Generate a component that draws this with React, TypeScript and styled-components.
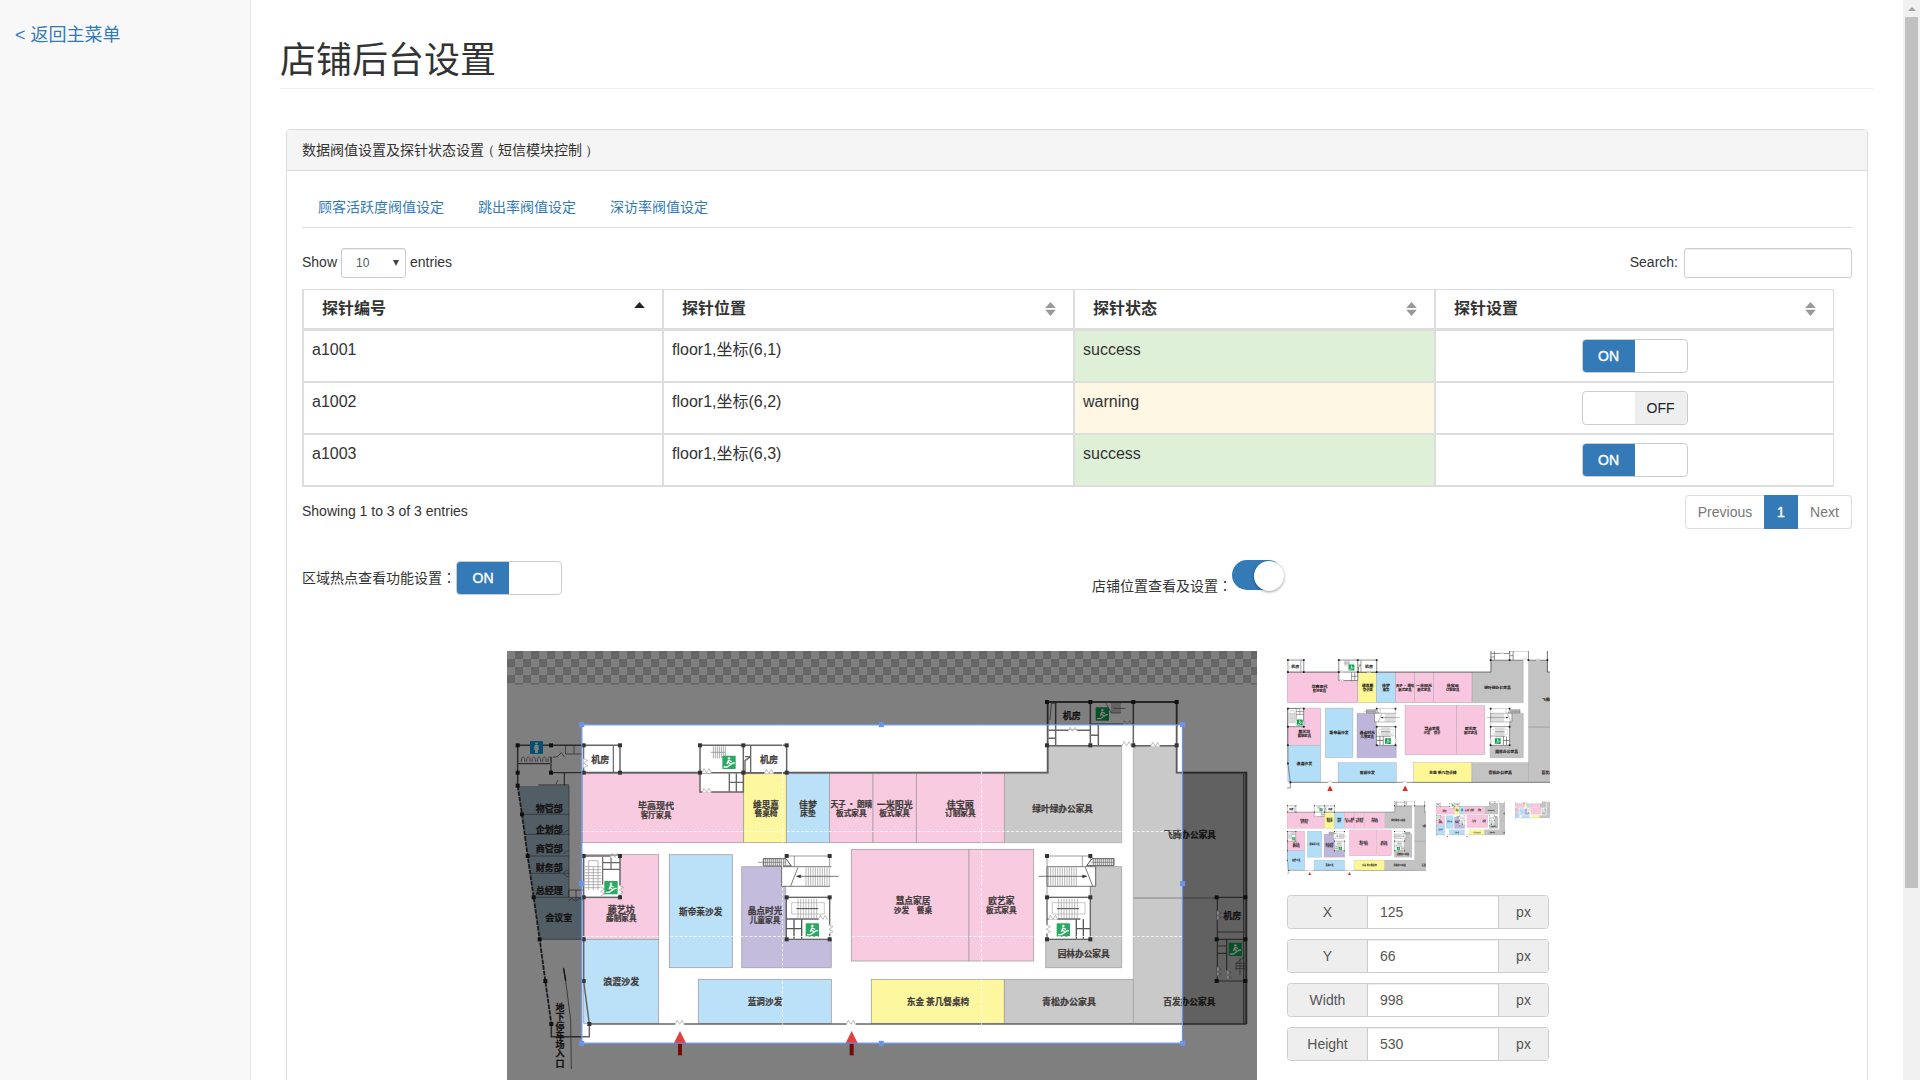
import React from "react";
import styled, { createGlobalStyle, css } from "styled-components";

const GlobalStyle = createGlobalStyle`
  * { box-sizing: border-box; }
  html, body { margin: 0; padding: 0; height: 100%; overflow: hidden; }
  body {
    background: #fff;
    color: #333;
    font: 14px/20px "Liberation Sans", "Noto Sans CJK SC", sans-serif;
    text-spacing-trim: space-all;
  }
  input, select, button { font-family: inherit; }
`;

const Shell = styled.div`
  display: grid;
  grid-template-columns: 251px minmax(0, 1fr) 17px;
  height: 1080px;
  overflow: hidden;
`;

const Sidebar = styled.aside`
  background: #f8f8f8;
  border-right: 1px solid #e7e7e7;
  padding: 23px 15px;
`;

const BackLink = styled.a`
  color: #337ab7;
  font-size: 18px;
  line-height: 25px;
  text-decoration: none;
`;

const Main = styled.main`
  padding: 41px 30px 0 29px;
`;

const PageTitle = styled.h1`
  margin: 0 0 40px;
  height: 48px;
  padding-bottom: 8px;
  border-bottom: 1px solid #eee;
  font-size: 36px;
  font-weight: 400;
  line-height: 39px;
`;

const Panel = styled.section`
  margin: 0 5px 0 6px;
  height: 1100px;
  border: 1px solid #ddd;
  border-radius: 4px;
`;

const PanelHeading = styled.header`
  height: 41px;
  padding: 10px 15px;
  background: #f5f5f5;
  border-bottom: 1px solid #ddd;
  border-radius: 3px 3px 0 0;
`;

const Bracket = styled.span<{ $shift: number }>`
  display: inline-block;
  width: 14px;
  text-indent: ${(p) => p.$shift}px;
  font-family: "Liberation Sans", sans-serif;
`;

const Colon = styled.i`
  display: inline-block;
  width: 14px;
  font-family: "Noto Sans CJK TC", sans-serif;
  font-style: normal;
`;

const PanelBody = styled.div`
  padding: 15px;
`;

const Tabs = styled.nav`
  display: flex;
  gap: 2px;
  height: 42px;
  border-bottom: 1px solid #ddd;
`;

const Tab = styled.a`
  padding: 11px 16px;
  color: #337ab7;
  text-decoration: none;
`;

const TableTools = styled.div`
  display: flex;
  justify-content: space-between;
  align-items: center;
  margin-top: 20px;
  height: 30px;
`;

const ToolLabel = styled.label`
  display: flex;
  align-items: center;

  > span { padding-bottom: 2px; }
`;

const controlLook = css`
  background: #fff;
  border: 1px solid #ccc;
  border-radius: 3px;
  box-shadow: inset 0 1px 1px rgba(0, 0, 0, 0.075);
  color: #555;
`;

const LengthSelect = styled.div`
  ${controlLook}
  display: flex;
  justify-content: space-between;
  align-items: center;
  width: 65px;
  height: 30px;
  margin: 0 4px;
  padding: 0 6px 0 14px;
  font-size: 12px;
`;

const Caret = styled.i`
  border-left: 3px solid transparent;
  border-right: 3px solid transparent;
  border-top: 6px solid #444;
`;

const SearchInput = styled.input`
  ${controlLook}
  width: 168px;
  height: 30px;
  margin-left: 6px;
  padding: 5px 10px;
`;

const Table = styled.div`
  display: grid;
  grid-template-columns: 360px 411px 361px 398px;
  width: 1532px;
  margin-top: 11px;
  border: 1px solid #ddd;
  font-size: 16px;
`;

const Cell = styled.div<{ $tone?: string; $center?: boolean }>`
  display: flex;
  justify-content: ${(p) => (p.$center ? "center" : "flex-start")};
  height: 52px;
  padding: ${(p) => (p.$center ? "8px 8px 0" : "7px 8px 0")};
  border: 1px solid #ddd;
  background: ${(p) => (p.$tone === "success" ? "#dff0d8" : p.$tone === "warning" ? "#fef7e4" : "#fff")};
  line-height: 23px;

  &:nth-child(4n) { border-right: 0; }
`;

const HeadCell = styled.div`
  display: flex;
  justify-content: space-between;
  align-items: center;
  height: 40px;
  padding: 0 17px 0 18px;
  border: 1px solid #ddd;
  border-top: 0;
  border-bottom-width: 2px;
  font-weight: 700;

  &:nth-child(4n) { border-right: 0; }
`;

const SortMark = styled.svg`
  display: block;
  width: 11px;
  height: 14px;
`;

const ToggleFrame = styled.div`
  display: flex;
  flex: none;
  width: 106px;
  height: 34px;
  border: 1px solid #ccc;
  border-radius: 4px;
  overflow: hidden;
  background: #fff;
`;

const ToggleHalf = styled.span<{ $kind: "on" | "off" | "blank" }>`
  flex: 1;
  font-size: 14px;
  line-height: 33px;
  text-align: center;
  ${(p) => p.$kind === "on" && "background: #337ab7; color: #fff; -webkit-text-stroke: 0.4px #fff;"}
  ${(p) => p.$kind === "off" && "background: #eee; color: #222;"}
`;

const TableFooter = styled.div`
  display: flex;
  justify-content: space-between;
  margin-top: 8px;
  height: 34px;
  line-height: 32px;
`;

const Pagination = styled.div`
  display: flex;
  height: 34px;
`;

const PageButton = styled.span<{ $active?: boolean; $width: number }>`
  width: ${(p) => p.$width}px;
  border: 1px solid #ddd;
  color: #777;
  text-align: center;
  line-height: 32px;
  &:first-child { border-radius: 4px 0 0 4px; border-right: 0; }
  &:last-child { border-radius: 0 4px 4px 0; border-left: 0; }
  ${(p) => p.$active && "background: #337ab7; border-color: #337ab7; color: #fff; -webkit-text-stroke: 0.4px #fff;"}
`;

const SettingsRow = styled.div`
  display: grid;
  grid-template-columns: 790px 1fr;
  margin-top: 30px;
  height: 92px;
`;

const Setting = styled.div<{ $drop: number }>`
  display: flex;
  align-items: flex-start;
  padding-top: ${(p) => (p.$drop > 10 ? 0 : 2)}px;

  > span { padding-top: ${(p) => p.$drop}px; }
`;

const SwitchTrack = styled.div`
  display: flex;
  justify-content: flex-end;
  width: 51px;
  height: 30px;
  margin-top: 1px;
  border-radius: 20px;
  background: #337ab7;
`;

const SwitchKnob = styled.i`
  width: 30px;
  height: 30px;
  margin: 1px -1px 0 0;
  border-radius: 50%;
  background: #fff;
  box-shadow: 0 1px 3px rgba(0, 0, 0, 0.4);
`;

const Workspace = styled.div`
  display: grid;
  grid-template-columns: 750px 264px;
  column-gap: 30px;
  padding-left: 205px;
`;

const CropperSvg = styled.svg`
  display: block;
  width: 750px;
  height: 469px;
`;

const PreviewSide = styled.div`
  display: flex;
  flex-direction: column;
`;

const PreviewList = styled.div`
  display: flex;
  flex-wrap: wrap;
  align-items: flex-start;
  gap: 10px;
  height: 244px;
  align-content: flex-start;
`;

const PreviewSvg = styled.svg<{ $w: number; $h: number }>`
  display: block;
  flex: none;
  width: ${(p) => p.$w}px;
  height: ${(p) => p.$h}px;
`;

const InputGroup = styled.label`
  display: grid;
  grid-template-columns: 79px 132px 49px;
  width: 262px;
  height: 34px;
  margin-bottom: 10px;
  border: 1px solid #ccc;
  border-radius: 4px;
  overflow: hidden;
  color: #555;
`;

const Addon = styled.span`
  background: #eee;
  text-align: center;
  line-height: 32px;
`;

const GroupInput = styled.input`
  min-width: 0;
  border: 0;
  border-left: 1px solid #ccc;
  border-right: 1px solid #ccc;
  box-shadow: inset 0 1px 1px rgba(0, 0, 0, 0.075);
  padding: 0 12px;
  color: #555;
  font-size: 14px;
`;

const Scrollbar = styled.div`
  display: flex;
  flex-direction: column;
  align-items: center;
  background: #f1f1f1;
`;

const ScrollArrow = styled.i<{ $down?: boolean }>`
  margin: ${(p) => (p.$down ? "auto 0 7px" : "7px 0 6px")};
  border-left: 4px solid transparent;
  border-right: 4px solid transparent;
  ${(p) => (p.$down ? "border-top: 4px solid #505050;" : "border-bottom: 4px solid #a3a3a3;")}
`;

const ScrollThumb = styled.div`
  width: 13px;
  height: 871px;
  background: #c1c1c1;
`;

/* ---------- floor plan drawing (3 units per displayed pixel) ---------- */

const PINK = "#f8c6de";
const BLUE = "#b3def8";
const GREY = "#c3c3c3";
const YELLOW = "#fdf795";
const PURPLE = "#beb5da";
const SLATE = "#a3bccd";

const rooms: [number, number, number, number, string][] = [
  [247, 401, 483, 207, PINK],
  [731, 401, 128, 207, YELLOW],
  [859, 401, 130, 207, BLUE],
  [989, 401, 130, 207, PINK],
  [1119, 401, 130, 207, PINK],
  [1249, 401, 264, 207, PINK],
  [251, 644, 225, 254, PINK],
  [251, 898, 225, 252, BLUE],
  [508, 644, 189, 339, BLUE],
  [1054, 628, 353, 335, PINK],
  [1407, 628, 194, 335, PINK],
  [595, 1018, 399, 133, BLUE],
  [1114, 1018, 399, 133, YELLOW],
  [1513, 1018, 387, 133, GREY],
];

const labels: [number, number, string, number][] = [
  [301, 360, "机房", 27], [807, 358, "机房", 27], [1715, 228, "机房", 27], [2197, 828, "机房", 27],
  [468, 498, "毕高现代", 27], [468, 526, "客厅家具", 23],
  [798, 493, "维思嘉", 26], [798, 520, "餐桌椅", 23],
  [924, 493, "佳梦", 27], [924, 520, "床垫", 23],
  [1054, 493, "天子 · 朗晴", 23], [1054, 518, "板式家具", 23],
  [1184, 493, "一米阳光", 27], [1184, 520, "板式家具", 23],
  [1381, 493, "佳宝丽", 27], [1381, 520, "订制家具", 23],
  [1688, 505, "绿叶绿办公家具", 26], [2070, 583, "飞腾办公家具", 26],
  [364, 808, "藤艺坊", 27], [364, 835, "藤制家具", 23],
  [364, 1025, "浪渡沙发", 27], [602, 814, "斯帝莱沙发", 26],
  [795, 813, "晶点时光", 26], [795, 841, "儿童家具", 23],
  [1239, 783, "慧点家居", 26], [1239, 810, "沙发　餐桌", 23],
  [1504, 783, "欧艺家", 26], [1504, 810, "板式家具", 23],
  [1751, 940, "园林办公家具", 26], [795, 1086, "蓝调沙发", 26],
  [1314, 1086, "东金 茶几餐桌椅", 26], [1707, 1086, "青松办公家具", 27],
  [2068, 1086, "百发办公家具", 26],
  [148, 505, "物管部", 27], [148, 568, "企划部", 27], [148, 627, "商管部", 27],
  [148, 682, "财务部", 27], [148, 752, "总经理", 27], [176, 833, "会议室", 27],
];

const columns: [number, number][] = [
  [53, 316], [153, 316], [53, 398], [153, 398], [53, 437], [66, 523], [83, 648], [101, 772],
  [119, 898], [136, 1023], [154, 1152], [251, 316], [360, 316], [251, 398], [360, 398],
  [600, 316], [730, 316], [860, 316], [600, 398], [730, 398], [860, 398],
  [251, 648], [360, 648], [251, 772], [360, 772], [251, 898], [251, 1023], [268, 1152],
  [860, 648], [989, 648], [860, 772], [989, 772], [860, 898], [989, 898],
  [1641, 186], [1771, 186], [1900, 186], [2030, 186], [1641, 316], [1771, 316], [1900, 316], [2030, 316],
  [1641, 648], [1771, 648], [1641, 772], [1771, 772], [1641, 898], [1771, 898],
  [2150, 772], [2236, 772], [2150, 898], [2236, 898], [2150, 1023], [2236, 1023],
];

const bars = (x: number, y: number, w: number, h: number, step: number) => {
  let d = "";
  for (let i = x; i <= x + w; i += step) d += `M${i} ${y}v${h}`;
  return d;
};
const rungs = (x: number, y: number, w: number, h: number, step: number) => {
  let d = "";
  for (let i = y; i <= y + h; i += step) d += `M${x} ${i}h${w}`;
  return d;
};

function ExitSign({ x, y }: { x: number; y: number }) {
  return (
    <g transform={`translate(${x} ${y})`}>
      <rect width="40" height="40" rx="2" fill="#12a050" />
      <circle cx="20" cy="8" r="3.6" fill="#fff" />
      <path d="M19 13l-5 12M19 14l9 4M17 19l8 7M4 34h10l18-12h5" fill="none" stroke="#fff" strokeWidth="4" />
    </g>
  );
}

function Door({ x, y, upright }: { x: number; y: number; upright?: boolean }) {
  return (
    <g transform={`translate(${x} ${y})${upright ? " rotate(90)" : ""}`}>
      <path d="M-14 0h28" stroke="#fff" strokeWidth="6" />
      <path d="M-14 3l6-13 8 12 7-12 7 13" fill="none" stroke="#777" strokeWidth="1.6" />
    </g>
  );
}

function StairCore({ x, flip }: { x: number; flip?: boolean }) {
  return (
    <g>
      <rect x={x} y="772" width="130" height="126" fill="#fff" stroke="#555" strokeWidth="4" />
      <path d={`M${x} 837h100`} stroke="#555" strokeWidth="4" />
      <path d={bars(x + 35, 776, 56, 58, 8)} stroke="#888" strokeWidth="1.8" />
      <path d={`M${x + 16} 788h98v34h-98z`} fill="none" stroke="#999" strokeWidth="1.8" />
      <path d={`M${x + 30} 806h66`} stroke="#333" strokeWidth="3" />
      {flip ? (
        <path d={`M${x + 88} 838v58M${x + 109} 838v58M${x + 88} 866h42`} stroke="#444" strokeWidth="4" />
      ) : (
        <path d={`M${x + 23} 838v58M${x + 46} 838v58M${x} 866h46`} stroke="#444" strokeWidth="4" />
      )}
      <ExitSign x={x + (flip ? 29 : 58)} y={850} />
      <Door x={flip ? x + 18 : x + 110} y={836} />
      <Door x={flip ? x : x + 130} y={868} upright />
    </g>
  );
}

type LabelSet = "all" | "cropped" | "none";

function FloorPlan({ show }: { show: LabelSet }) {
  const visible = labels.filter(([x, y]) => show === "all" || (show === "cropped" && x > 245 && x < 2110 && y > 254));
  return (
    <g>
      <rect x="21" y="134" width="2250" height="1306" fill="#fff" />
      <path d="M55 438H207V772H251V898H119L101 772 83 648 66 523Z" fill={SLATE} />
      <path d="M66 523H207M75 583H207M83 648H207M92 700H207M101 772H251V898H119M207 437V772" fill="none" stroke="#555" strokeWidth="2" />
      <path d="M1645 319H1865V608H1513V401H1645Z" fill={GREY} stroke="#999" strokeWidth="2" />
      <path d="M1900 319H2030V401H2238V1151H1900Z" fill={GREY} stroke="#999" strokeWidth="2" />
      {rooms.map(([x, y, w, h, fill], i) => (
        <rect key={i} x={x} y={y} width={w} height={h} fill={fill} stroke="#9b9499" strokeWidth="2.4" />
      ))}
      <path d="M725 680H845V739H857V898H994V983H725Z" fill={PURPLE} stroke="#999" strokeWidth="2.4" />
      <path d="M1787 680H1865V983H1637V898H1771V739H1787Z" fill={GREY} stroke="#999" strokeWidth="2.4" />
      <path d="M1900 774H2150" stroke="#777" strokeWidth="3" />

      <path d="M251 398H600M730 398H860M860 398H1643V186H2030V398H2239V1152" fill="none" stroke="#4a4a4a" strokeWidth="5.5" />
      <path d="M268 1152H526M552 1152H1040M1067 1152H2239" fill="none" stroke="#555" strokeWidth="4.5" />
      <path d="M53 316H360V398M53 316V437M154 1152V1190H268V1152L251 1023V644" fill="none" stroke="#555" strokeWidth="4.5" />
      <path d="M53 437L66 523 83 648 101 772 119 898 136 1023 154 1152" fill="none" stroke="#3a3a3a" strokeWidth="5.5" strokeDasharray="14 3" />
      <path d="M251 316V398M340 318V396M153 350V398H251M193 398V437M115 435H207M55 371H150" fill="none" stroke="#555" strokeWidth="3.6" />
      <path d="M64 366v-10l5-6 5 6v10M80 366v-10l5-6 5 6v10M96 366v-10l5-6 5 6v10M112 366v-10l5-6 5 6v10M128 366v-10l5-6 5 6v10M144 366v-10l5-6 5 6v10" fill="none" stroke="#555" strokeWidth="2" />
      <path d="M158 352l14-2 12-12 10 14M197 318v24h50M222 318v24M168 432l6-12" fill="none" stroke="#666" strokeWidth="2.6" />
      <path d="M190 983L197 1023 212 1140 214 1287M206 770v-20h45M228 750v28M205 783l10-8 12 8 12-8 12 8" fill="none" stroke="#555" strokeWidth="2.4" />
      <path d="M191 985L197 1023" stroke="#222" strokeWidth="4" />
      <path d="M206 632c-10 2-14 6-14 10M206 690c-10 2-14 6-14 10 0 6 6 10 14 10M206 570c-10 2-12 6-14 10" fill="none" stroke="#555" strokeWidth="2" />

      <rect x="90" y="303" width="39" height="39" rx="3" fill="#0ba0e4" />
      <circle cx="109.5" cy="310" r="3.6" fill="#fff" />
      <path d="M104 315h11l2 14h-3v10h-9v-10h-3z" fill="#fff" />

      <path d="M600 316H860V398H600ZM600 398V456H730V316" fill="#fff" stroke="#555" strokeWidth="4.5" />
      <path d="M735 350H752M752 318V350L735 362V396M752 350V398M688 400V456M709 400V456M688 427H730" fill="none" stroke="#555" strokeWidth="4" />
      <path d={bars(640, 319, 36, 36, 6) + "M632 337h44"} stroke="#777" strokeWidth="2" />
      <Door x={620} y={396} />
      <Door x={807} y={398} />
      <Door x={620} y={455} />
      <Door x={253} y={370} upright />
      <ExitSign x={667} y={347} />

      <rect x="251" y="648" width="109" height="124" fill="#fff" stroke="#555" strokeWidth="4.5" />
      <path d={rungs(254, 680, 50, 68, 9)} stroke="#888" strokeWidth="2" />
      <path d="M266 750V662H294V750M280 680V750" fill="none" stroke="#888" strokeWidth="2" />
      <path d="M308 650V734M333 650V688M308 668H360M308 688H360" fill="none" stroke="#555" strokeWidth="3.5" />
      <Door x={345} y={650} />
      <Door x={304} y={755} upright />
      <Door x={360} y={750} upright />
      <ExitSign x={313} y={723} />

      <path d="M860 648H989V680M883 648V678" fill="none" stroke="#777" strokeWidth="2.4" />
      <path d="M790 656H858L874 678H790Z" fill="#eee" stroke="#444" strokeWidth="3" />
      <path d={bars(796, 657, 60, 20, 6) + "M774 667h80"} stroke="#555" strokeWidth="2" />
      <path d="M845 680H994M845 680V739H990M894 682L872 738" fill="none" stroke="#555" strokeWidth="2.6" />
      <path d={bars(918, 682, 70, 56, 7)} stroke="#888" strokeWidth="2" />
      <path d="M890 709H1016M890 709l12-4v8z" stroke="#333" strokeWidth="2.2" />
      <StairCore x={859} />

      <path d="M1641 648H1771V680M1747 648V678M1641 648V772M1771 739V772" fill="none" stroke="#777" strokeWidth="2.4" />
      <path d="M1760 677L1776 656H1842V677Z" fill="#eee" stroke="#444" strokeWidth="3" />
      <path d={bars(1780, 657, 60, 20, 6) + "M1775 667h65"} stroke="#555" strokeWidth="2" />
      <path d="M1641 680H1787V739H1641ZM1756 682L1778 738" fill="none" stroke="#555" strokeWidth="2.6" />
      <path d={bars(1645, 682, 84, 56, 7)} stroke="#888" strokeWidth="2" />
      <path d="M1616 709H1760M1760 709l-12-4v8z" stroke="#333" strokeWidth="2.2" />
      <StairCore x={1641} flip />

      <path d="M1667 188V316M1645 271H1771V186M1771 253H1900V186M1900 253V316M1645 295H1667M1645 317H1865M1900 317H2030M1771 253V316M1795 255V316M1771 286H1795" fill="none" stroke="#555" strokeWidth="4.5" />
      <path d="M1650 240L1654 190H1667" fill="none" stroke="#555" strokeWidth="2.4" />
      <path d={bars(1836, 189, 26, 30, 6) + "M1818 189l16 30h28M1840 205h36"} fill="none" stroke="#555" strokeWidth="2" />
      <Door x={1718} y={272} />
      <Door x={1882} y={252} />
      <Door x={1880} y={315} />
      <Door x={1966} y={317} />
      <ExitSign x={1787} y={202} />

      <path d="M2150 772H2238M2152 772V1023M2150 876H2236M2150 898H2236M2150 1023H2236M2150 918H2180M2150 940H2180M2180 898V990M2231 401V1151" fill="none" stroke="#555" strokeWidth="3.6" />
      <path d={rungs(2208, 970, 28, 20, 8) + "M2220 955v50M2208 990V970l26-20"} fill="none" stroke="#444" strokeWidth="2" />
      <Door x={2154} y={826} upright />
      <Door x={2154} y={995} upright />
      <Door x={2184} y={1005} upright />
      <ExitSign x={2186} y={908} />

      <Door x={539} y={1151} />
      <Door x={1053} y={1151} />
      {[540, 1055].map((x) => (
        <g key={x}>
          <path d={`M${x} 1173L${x + 19} 1211H${x - 19}Z`} fill="#df2b26" />
          <rect x={x - 6} y="1210" width="12" height="36" fill="#df1b16" />
        </g>
      ))}
      {columns.map(([x, y], i) => (
        <rect key={i} x={x - 6} y={y - 6} width="12" height="12" fill="#1e1e1e" />
      ))}
      <g
        fill="#2b2525"
        stroke="#2b2525"
        strokeWidth="0.7"
        fontWeight="700"
        textAnchor="middle"
        fontFamily='"Noto Sans CJK SC", sans-serif'
      >
        {visible.map(([x, y, text, size], i) => (
          <text key={i} x={x} y={y + size * 0.37} fontSize={size}>{text}</text>
        ))}
        {show === "all" && [..."地下停车场入口"].map((ch, i) => (
          <text key={ch} x="180" y={1113 + i * 27.8} fontSize="27">{ch}</text>
        ))}
      </g>
    </g>
  );
}

const handles = [
  [245, 254], [1144, 254], [2048, 254], [2048, 731],
  [2048, 1210], [1144, 1210], [245, 1210], [245, 731],
];

function Cropper() {
  return (
    <CropperSvg viewBox="21 33 2250 1407">
      <defs>
        <pattern id="checker" x="21" y="33" width="48" height="48" patternUnits="userSpaceOnUse">
          <rect width="48" height="48" fill="#fff" />
          <path d="M24 0h24v24H24zM0 24h24v24H0z" fill="#ccc" />
        </pattern>
      </defs>
      <rect x="21" y="33" width="2250" height="102" fill="url(#checker)" />
      <FloorPlan show="all" />
      <path d="M21 33H2271V1440H21ZM245 254V1210H2048V254Z" fillRule="evenodd" fill="#000" fillOpacity="0.5" />
      <rect x="245" y="254" width="1803" height="956" fill="#fff" fillOpacity="0.1" />
      <path d="M245 574.5H2048M245 889.5H2048M847.5 254V1210M1444.5 254V1210" stroke="#fff" strokeOpacity="0.75" strokeWidth="3" strokeDasharray="9 5" />
      <rect x="245.5" y="254.5" width="1802" height="955" fill="none" stroke="#6691f0" strokeWidth="3.6" />
      {handles.map(([x, y], i) => (
        <rect key={i} x={x - 7.5} y={y - 7.5} width="15" height="15" fill="#6a95ee" />
      ))}
    </CropperSvg>
  );
}

const previewSizes: [number, number, LabelSet][] = [
  [263, 140, "cropped"],
  [139, 74, "cropped"],
  [69, 36, "cropped"],
  [35, 18, "none"],
];

function Toggle({ on }: { on: boolean }) {
  return (
    <ToggleFrame>
      <ToggleHalf $kind={on ? "on" : "blank"}>{on ? "ON" : ""}</ToggleHalf>
      <ToggleHalf $kind={on ? "blank" : "off"}>{on ? "" : "OFF"}</ToggleHalf>
    </ToggleFrame>
  );
}

function SortIcon({ ascending }: { ascending?: boolean }) {
  return (
    <SortMark viewBox="0 0 11 14">
      <path d="M5.5 0L10.8 6H.2Z" fill={ascending ? "#222" : "#999"} />
      {!ascending && <path d="M5.5 14L10.8 7.7H.2Z" fill="#999" />}
    </SortMark>
  );
}

const probes = [
  { id: "a1001", place: "floor1,坐标(6,1)", state: "success", on: true },
  { id: "a1002", place: "floor1,坐标(6,2)", state: "warning", on: false },
  { id: "a1003", place: "floor1,坐标(6,3)", state: "success", on: true },
];

const cropData = [["X", "125"], ["Y", "66"], ["Width", "998"], ["Height", "530"]];

export default function App() {
  return (
    <>
      <GlobalStyle />
      <Shell>
        <Sidebar>
          <BackLink>&lt; 返回主菜单</BackLink>
        </Sidebar>
        <Main>
          <PageTitle>店铺后台设置</PageTitle>
          <Panel>
            <PanelHeading>
              数据阀值设置及探针状态设置
              <Bracket $shift={-3}>（</Bracket>短信模块控制<Bracket $shift={3}>）</Bracket>
            </PanelHeading>
            <PanelBody>
              <Tabs>
                <Tab>顾客活跃度阀值设定</Tab>
                <Tab>跳出率阀值设定</Tab>
                <Tab>深访率阀值设定</Tab>
              </Tabs>
              <TableTools>
                <ToolLabel>
                  <span>Show</span>
                  <LengthSelect>10<Caret /></LengthSelect>
                  <span>entries</span>
                </ToolLabel>
                <ToolLabel>
                  <span>Search:</span>
                  <SearchInput />
                </ToolLabel>
              </TableTools>
              <Table>
                {["探针编号", "探针位置", "探针状态", "探针设置"].map((title, i) => (
                  <HeadCell key={title}>
                    {title}
                    <SortIcon ascending={i === 0} />
                  </HeadCell>
                ))}
                {probes.map((p) => (
                  <React.Fragment key={p.id}>
                    <Cell>{p.id}</Cell>
                    <Cell>{p.place}</Cell>
                    <Cell $tone={p.state}>{p.state}</Cell>
                    <Cell $center><Toggle on={p.on} /></Cell>
                  </React.Fragment>
                ))}
              </Table>
              <TableFooter>
                <span>Showing 1 to 3 of 3 entries</span>
                <Pagination>
                  <PageButton $width={79}>Previous</PageButton>
                  <PageButton $width={34} $active>1</PageButton>
                  <PageButton $width={54}>Next</PageButton>
                </Pagination>
              </TableFooter>
              <SettingsRow>
                <Setting $drop={6}>
                  <span>区域热点查看功能设置<Colon>：</Colon></span>
                  <Toggle on />
                </Setting>
                <Setting $drop={16}>
                  <span>店铺位置查看及设置<Colon>：</Colon></span>
                  <SwitchTrack><SwitchKnob /></SwitchTrack>
                </Setting>
              </SettingsRow>
              <Workspace>
                <Cropper />
                <PreviewSide>
                  <PreviewList>
                    {previewSizes.map(([w, h, show]) => (
                      <PreviewSvg key={w} $w={w} $h={h} viewBox="245 254 1803 957" preserveAspectRatio="none">
                        <FloorPlan show={show} />
                      </PreviewSvg>
                    ))}
                  </PreviewList>
                  {cropData.map(([name, value]) => (
                    <InputGroup key={name}>
                      <Addon>{name}</Addon>
                      <GroupInput defaultValue={value} />
                      <Addon>px</Addon>
                    </InputGroup>
                  ))}
                </PreviewSide>
              </Workspace>
            </PanelBody>
          </Panel>
        </Main>
        <Scrollbar>
          <ScrollArrow />
          <ScrollThumb />
          <ScrollArrow $down />
        </Scrollbar>
      </Shell>
    </>
  );
}
